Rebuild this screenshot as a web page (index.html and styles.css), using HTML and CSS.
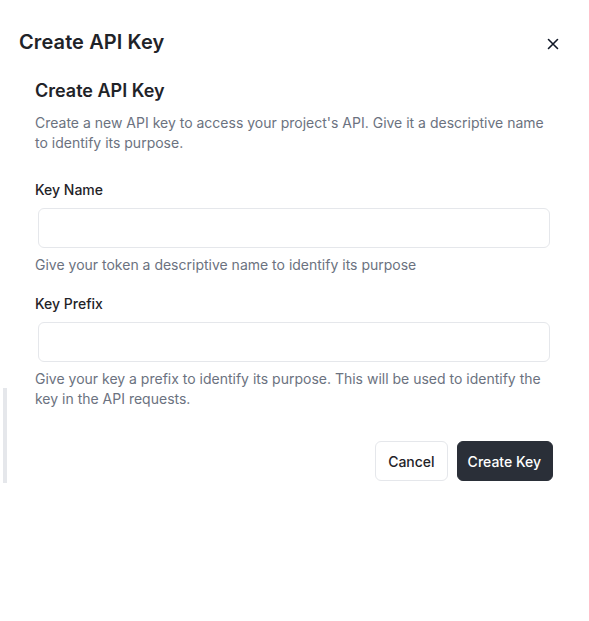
FILE: index.html
```html
<!DOCTYPE html>
<html lang="en">
<head>
<meta charset="utf-8">
<title>Create API Key</title>
<link rel="stylesheet" href="styles.css">
</head>
<body>
<div class="side-bar"></div>
<div class="dialog">
  <header class="dialog-header">
    <h1 class="dialog-title">Create API Key</h1>
    <button class="close-btn" aria-label="Close">
      <svg width="12" height="12" viewBox="0 0 12 12" fill="none" stroke="#111827" stroke-width="1.6" stroke-linecap="round"><path d="M1.5 1.5l9 9M10.5 1.5l-9 9"/></svg>
    </button>
  </header>
  <section class="dialog-body">
    <h2 class="section-title">Create API Key</h2>
    <p class="section-desc">Create a new API key to access your project's API. Give it a descriptive name to identify its purpose.</p>
    <div class="field first">
      <label class="field-label">Key Name</label>
      <input class="field-input" type="text">
      <p class="field-help">Give your token a descriptive name to identify its purpose</p>
    </div>
    <div class="field">
      <label class="field-label">Key Prefix</label>
      <input class="field-input" type="text">
      <p class="field-help">Give your key a prefix to identify its purpose. This will be used to identify the key in the API requests.</p>
    </div>
    <div class="actions">
      <button class="btn btn-outline">Cancel</button>
      <button class="btn btn-primary">Create Key</button>
    </div>
  </section>
</div>
</body>
</html>
```

FILE: styles.css
```css
* { box-sizing: border-box; }
html, body { margin: 0; padding: 0; background: #ffffff; }
body {
  font-family: Inter, "Noto Sans", sans-serif;
  color: #1f2328;
  width: 589px;
  height: 621px;
  position: relative;
}
.side-bar {
  position: absolute;
  left: 3px;
  top: 388px;
  width: 4px;
  height: 95px;
  background: #e5e7eb;
}
.dialog { padding: 28px 0 0 0; }
.dialog-header {
  display: flex;
  align-items: center;
  justify-content: space-between;
  padding: 0 30px 0 19px;
  height: 28px;
}
.dialog-title {
  margin: 0;
  font-size: 20px;
  line-height: 28px;
  font-weight: 600;
  color: #1f2328;
  letter-spacing: 0.1px;
}
.close-btn {
  border: 0;
  background: none;
  padding: 0;
  width: 12px;
  height: 12px;
  margin-top: 4px;
  display: flex;
  cursor: pointer;
}
.dialog-body {
  padding: 21px 37px 0 35px;
}
.section-title {
  margin: 0;
  font-size: 18px;
  line-height: 28px;
  font-weight: 600;
  color: #1f2328;
}
.section-desc {
  margin: 8px 0 0 0;
  font-size: 14px;
  line-height: 20px;
  color: #6b7280;
}
.field { margin-top: 19px; display: flex; flex-direction: column; }
.field.first { margin-top: 27px; }
.field-label {
  font-size: 14px;
  line-height: 20px;
  font-weight: 500;
  color: #1f2328;
}
.field-input {
  margin: 8px 2px 0 3px;
  height: 40px;
  border: 1px solid #e5e7eb;
  border-radius: 6px;
  background: #fff;
  font: inherit;
  padding: 0 12px;
}
.field-help {
  margin: 7px 0 0 0;
  font-size: 14px;
  line-height: 20px;
  color: #6b7280;
}
.actions {
  display: flex;
  justify-content: flex-end;
  gap: 9px;
  margin-top: 32px;
  margin-right: -1px;
}
.btn {
  height: 40px;
  border-radius: 6px;
  font-family: inherit;
  font-size: 14px;
  font-weight: 500;
  cursor: pointer;
}
.btn-outline {
  background: #fff;
  border: 1px solid #e5e7eb;
  color: #1f2328;
  padding: 0 12px 0 12px;
}
.btn-primary {
  background: #2a2f38;
  border: 1px solid #2a2f38;
  color: #fff;
  padding: 0 11px 0 10px;
}
```
